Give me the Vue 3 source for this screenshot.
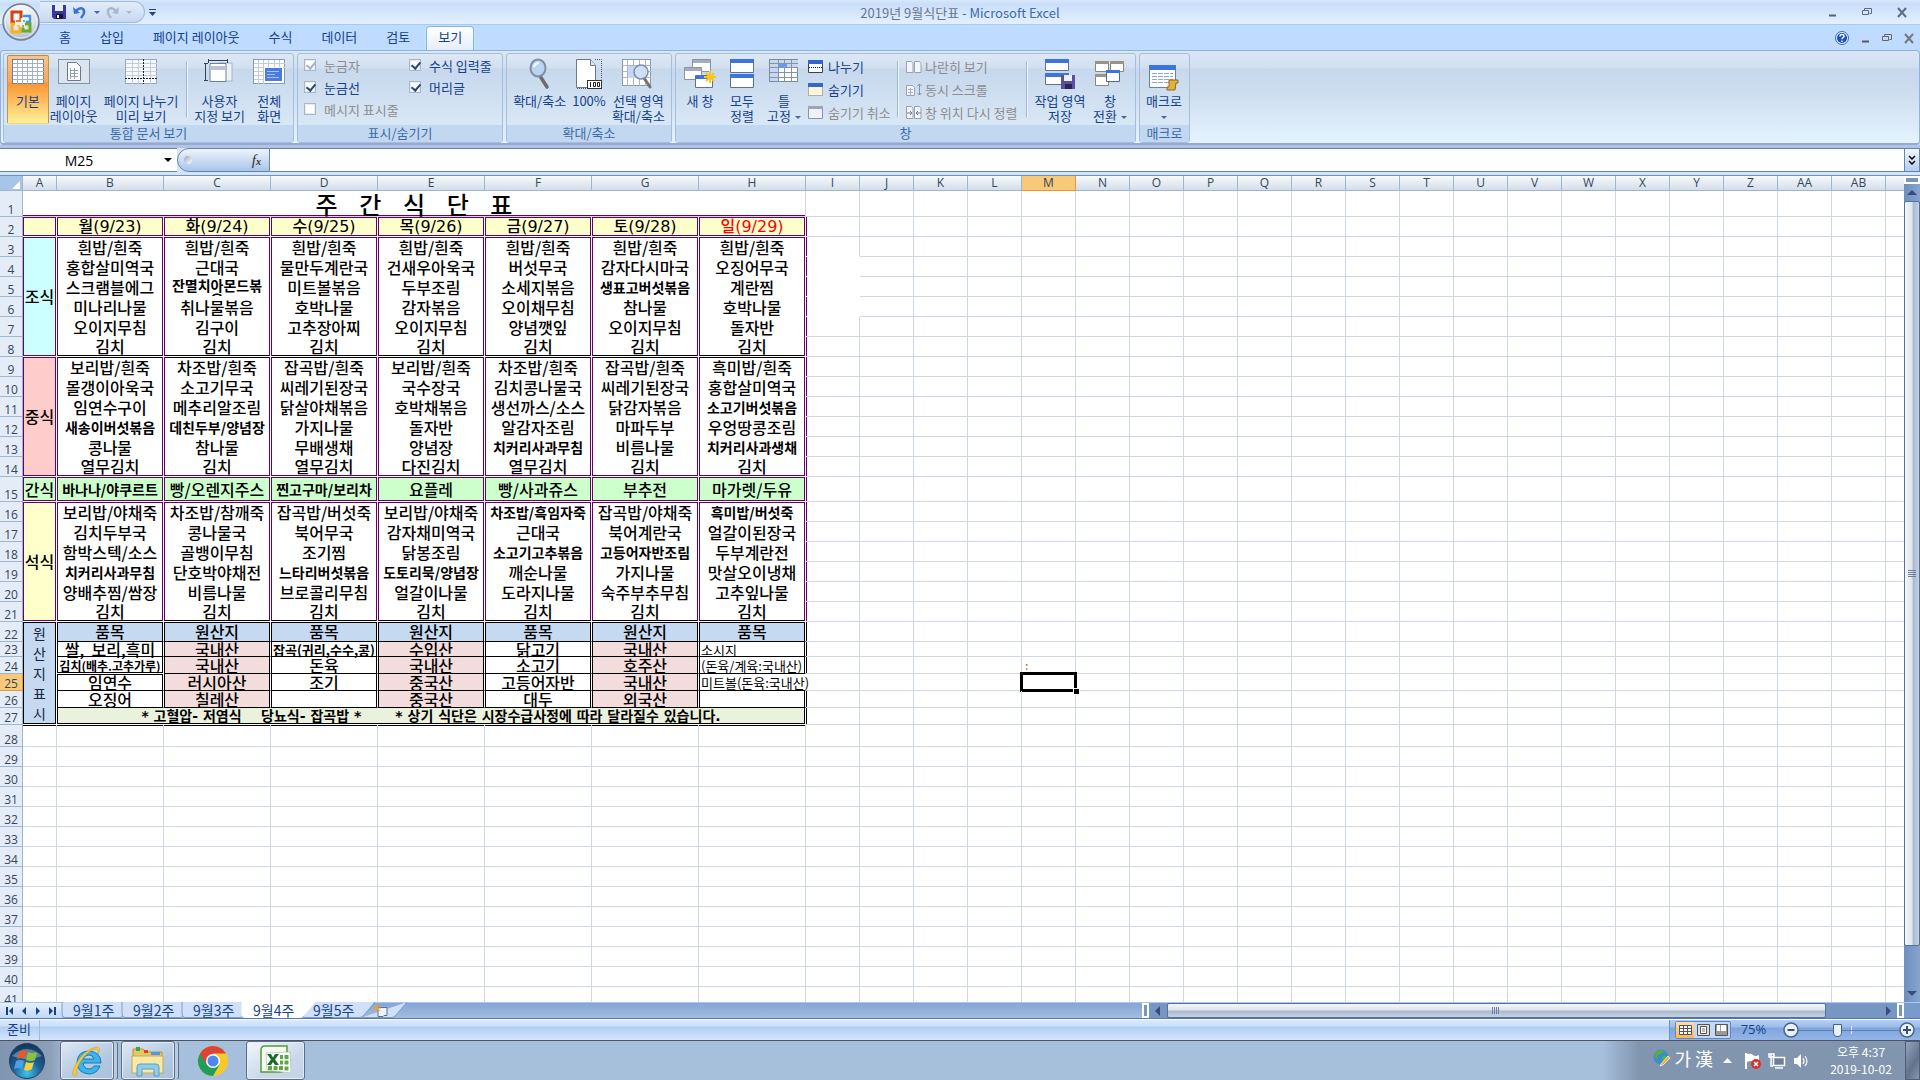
<script setup>
import { ref } from 'vue'

const tabs = ['홈', '삽입', '페이지 레이아웃', '수식', '데이터', '검토', '보기']
const sheets = ['9월1주', '9월2주', '9월3주', '9월4주', '9월5주']
const activeSheet = ref('9월4주')
const zoom = ref(37)

const letters = ['A', 'B', 'C', 'D', 'E', 'F', 'G', 'H', 'I', 'J', 'K', 'L', 'M', 'N', 'O', 'P', 'Q', 'R', 'S', 'T', 'U', 'V', 'W', 'X', 'Y', 'Z', 'AA', 'AB', 'AC']

const heading = '주    간    식    단    표'
const week = {
  2: '월(9/23)|화(9/24)|수(9/25)|목(9/26)|금(9/27)|토(9/28)|일(9/29)',
  3: '흰밥/흰죽|흰밥/흰죽|흰밥/흰죽|흰밥/흰죽|흰밥/흰죽|흰밥/흰죽|흰밥/흰죽',
  4: '홍합살미역국|근대국|물만두계란국|건새우아욱국|버섯무국|감자다시마국|오징어무국',
  5: '스크램블에그|잔멸치아몬드볶음|미트볼볶음|두부조림|소세지볶음|생표고버섯볶음|계란찜',
  6: '미나리나물|취나물볶음|호박나물|감자볶음|오이채무침|참나물|호박나물',
  7: '오이지무침|김구이|고추장아찌|오이지무침|양념깻잎|오이지무침|돌자반',
  8: '김치|김치|김치|김치|김치|김치|김치',
  9: '보리밥/흰죽|차조밥/흰죽|잡곡밥/흰죽|보리밥/흰죽|차조밥/흰죽|잡곡밥/흰죽|흑미밥/흰죽',
  10: '몰갱이아욱국|소고기무국|씨레기된장국|국수장국|김치콩나물국|씨레기된장국|홍합살미역국',
  11: '임연수구이|메추리알조림|닭살야채볶음|호박채볶음|생선까스/소스|닭감자볶음|소고기버섯볶음',
  12: '새송이버섯볶음|데친두부/양념장|가지나물|돌자반|알감자조림|마파두부|우엉땅콩조림',
  13: '콩나물|참나물|무배생채|양념장|치커리사과무침|비름나물|치커리사과생채',
  14: '열무김치|김치|열무김치|다진김치|열무김치|김치|김치',
  15: '바나나/야쿠르트|빵/오렌지주스|찐고구마/보리차|요플레|빵/사과쥬스|부추전|마가렛/두유',
  16: '보리밥/야채죽|차조밥/참깨죽|잡곡밥/버섯죽|보리밥/야채죽|차조밥/흑임자죽|잡곡밥/야채죽|흑미밥/버섯죽',
  17: '김치두부국|콩나물국|북어무국|감자채미역국|근대국|북어계란국|얼갈이된장국',
  18: '함박스텍/소스|골뱅이무침|조기찜|닭봉조림|소고기고추볶음|고등어자반조림|두부계란전',
  19: '치커리사과무침|단호박야채전|느타리버섯볶음|도토리묵/양념장|깨순나물|가지나물|맛살오이냉채',
  20: '양배추찜/쌈장|비름나물|브로콜리무침|얼갈이나물|도라지나물|숙주부추무침|고추잎나물',
  21: '김치|김치|김치|김치|김치|김치|김치',
  22: '품목|원산지|품목|원산지|품목|원산지|품목',
  23: '쌀,  보리,흑미|국내산|잡곡(귀리,수수,콩)|수입산|닭고기|국내산|소시지',
  24: '김치(배추.고추가루)|국내산|돈육|국내산|소고기|호주산|(돈육/계육:국내산)',
  25: '임연수|러시아산|조기|중국산|고등어자반|국내산|미트볼(돈육:국내산)',
  26: '오징어|칠레산||중국산|대두|외국산|'
}
const sideLabels = {
  2: { text: '', span: 1, cls: 'yellow' },
  3: { text: '조식', span: 6, cls: 'cyan' },
  9: { text: '중식', span: 6, cls: 'pink' },
  15: { text: '간식', span: 1, cls: 'green' },
  16: { text: '석식', span: 6, cls: 'yellow' },
  22: { text: '원산지표시', span: 6, cls: 'origin' }
}
const notice = '* 고혈압- 저염식    당뇨식- 잡곡밥 *       * 상기 식단은 시장수급사정에 따라 달라질수 있습니다.'

const heights = { 1: 26, 15: 25, 23: 15, 24: 17, 25: 17, 26: 17, 27: 17, 28: 22 }
const tinyText = { '잡곡(귀리,수수,콩)': 't13', '김치(배추.고추가루)': 't12' }
const blockEnds = [8, 14, 21]

function menuClass(row, col, text) {
  const c = ['box']
  if (row === 2) c.push('day', 'yellow', 'all')
  else if (row === 15) c.push('green', 'all')
  else if (row < 22) {
    if (row === 3 || row === 16) c.push('top')
    if (row === 9) c.push('topk')
    if (row === 8 || row === 21) c.push('botk')
    if (row === 14) c.push('bot')
    if (!blockEnds.includes(row)) c.push('mid')
  } else {
    c.push('ink')
    if (row === 22) c.push('blue', 'topk')
    else if (col % 2 === 1) c.push('rose')
    if (row === 24 && col === 0) c.push('botk', 'gap')
    if (row === 25 && col === 0) c.push('topk')
    if (row > 22 && col === 6) c.push('left')
    if (row === 25 && col === 6) c.push('open')
  }
  if (row === 2 && col === 6) c.push('red')
  if (tinyText[text]) c.push(tinyText[text])
  else if (row < 22 && row > 2 && (text.length > 7 || text === '흑미밥/버섯죽' || (text.length === 7 && !text.includes('/')))) c.push('t14')
  return c
}
function plainClass(row, i) {
  return {
    edge: i === 8 && row > 1 && row < 22,
    edgek: i === 8 && row > 21 && row < 28 && row !== 25,
    topline: row === 28 && i < 8,
    nobottom: i === 8 && row === 3,
    blank: i === 8 && row > 3 && row < 7,
    selected: row === 25 && i === 12
  }
}
const rows = Array.from({ length: 42 }, (_, k) => {
  const n = k + 1
  return {
    n,
    h: heights[n] || 20,
    side: sideLabels[n],
    menu: week[n] ? week[n].split('|') : null,
    start: n < 28 ? 8 : 0
  }
})
const range = (from) => Array.from({ length: 29 - from }, (_, i) => i + from)
</script>

<template>
  <div class="app">
    <header class="titlebar">
      <button class="orb" aria-label="Office">
        <svg width="40" height="40" viewBox="0 0 40 40">
          <defs>
            <radialGradient id="orbg" cx="50%" cy="30%" r="75%">
              <stop offset="0" stop-color="#fff" /><stop offset=".55" stop-color="#dfe3ea" /><stop offset="1" stop-color="#9da9bb" />
            </radialGradient>
          </defs>
          <circle cx="20" cy="20" r="18" fill="url(#orbg)" stroke="#6f7f99" stroke-width="1.5" />
          <circle cx="20" cy="20" r="16" fill="none" stroke="#fff" stroke-opacity=".7" />
          <g fill="none" stroke-width="3">
            <path d="M14 20h-3v-10h9v6" stroke="#d8400f" />
            <path d="M22 14h7v6h-4" stroke="#3f97d8" stroke-width="2.4" />
            <path d="M14 22h-3v8h8v-5" stroke="#f5b21a" />
            <path d="M22 26v3h7v-7h-5" stroke="#6aa82e" />
          </g>
          <g stroke-width="2" fill="none"><path d="M15 19h4v-3" stroke="#ef7a1a" /><path d="M22 19h2" stroke="#58b0e6" /><path d="M16 24h3" stroke="#f5c93a" /><path d="M22 23v3" stroke="#8ec34a" /></g>
        </svg>
      </button>
      <div class="qat">
        <button aria-label="저장"><svg width="14" height="14"><path d="M0 0h14v14h-12l-2-2z" fill="#3a37a0" /><path d="M3 0h8v6h-8z" fill="#e8ecfa" /><path d="M4 9h7v5h-7z" fill="#15153a" /><path d="M5 10h2v3h-2z" fill="#fff" /></svg></button>
        <button aria-label="실행 취소"><svg width="14" height="13"><path d="M3 5q4-4 7-2q3 3-2 9" fill="none" stroke="#3a6fd0" stroke-width="2.500" /><path d="M0 1l1 7 6-1z" fill="#3a6fd0" /></svg></button>
        <i class="caret"></i>
        <button aria-label="다시 실행" disabled><svg width="14" height="13"><path d="M11 5q-4-4-7-2q-3 3 2 9" fill="none" stroke="#a9b7cc" stroke-width="2.500" /><path d="M14 1l-1 7 -6-1z" fill="#a9b7cc" /></svg></button>
        <i class="caret dim"></i>
      </div>
      <button class="qatmore" aria-label="사용자 지정"><svg width="7" height="7"><path d="M0 .5h7" stroke="#27437a" /><path d="M0 3h7l-3.500 4z" fill="#27437a" /></svg></button>
      <h1 class="title"><span>2019년 9월식단표</span> - Microsoft Excel</h1>
      <div class="winbtns">
        <button aria-label="최소화"><svg width="9" height="9"><path d="M1 7.500h7" stroke="#51617a" stroke-width="2" /></svg></button>
        <button aria-label="복원"><svg width="10" height="9"><path d="M2.500 2v-1.500h7v5h-2M.5 2.500h6v4h-6z" fill="none" stroke="#5c6c86" /></svg></button>
        <button aria-label="닫기"><svg width="10" height="9"><path d="M1 0l8 9M9 0l-8 9" stroke="#5c6c86" stroke-width="2" /></svg></button>
      </div>
    </header>

    <nav class="tabs">
      <button v-for="t in tabs" :key="t" :class="{ on: t === '보기' }">{{ t }}</button>
      <div class="docbtns">
        <button aria-label="도움말"><svg width="14" height="14"><circle cx="7" cy="7" r="6.500" fill="#dfeafc" stroke="#3f6fb8" /><circle cx="7" cy="7" r="5" fill="#1c50c4" /><path d="M5 5.500q0-2 2-2t2 1.700q0 1-1 1.500t-1 1.500M7 9.500v1.500" stroke="#fff" stroke-width="1.400" fill="none" /></svg></button>
        <button aria-label="창 최소화"><svg width="9" height="9"><path d="M1 7.500h7" stroke="#5a5a5a" stroke-width="2" /></svg></button>
        <button aria-label="창 복원"><svg width="10" height="9"><path d="M2.500 2v-1.500h7v5h-2M.5 2.500h6v4h-6z" fill="none" stroke="#666" /></svg></button>
        <button aria-label="창 닫기"><svg width="10" height="9"><path d="M1 0l8 9M9 0l-8 9" stroke="#777" stroke-width="2" /></svg></button>
      </div>
    </nav>

    <section class="ribbon">
      <div class="group g1">
        <div class="tools">
          <button class="big w42 active">
            <svg width="32" height="26"><rect x=".5" y=".5" width="31" height="24" fill="#fff" stroke="#6b7f9e" /><path d="M5.500 1v24M10.500 1v24M15.500 1v24M20.500 1v24M25.500 1v24M1 4.500h31M1 8.500h31M1 12.500h31M1 16.500h31M1 20.500h31" stroke="#9fb0c8" /></svg>
            <span>기본</span>
          </button>
          <button class="big w50">
            <svg width="32" height="26"><rect x=".5" y=".5" width="31" height="24" fill="#dce4ee" stroke="#8794a8" /><path d="M9.500 3.500h9l4 4v14h-13z" fill="#fff" stroke="#68788f" /><path d="M12 11.500h8M12 14.500h8M12 17.500h8M12.500 9v11M16.500 9v11" stroke="#8fa0b8" /></svg>
            <span>페이지<br>레이아웃</span>
          </button>
          <button class="big w86">
            <svg width="32" height="26"><rect x=".5" y=".5" width="31" height="24" fill="#f6f8fb" stroke="#9aa8bd" /><path d="M7.500 1v24M13.500 1v24M25.500 1v24M1 4.500h31M1 8.500h31M1 12.500h31M1 16.500h31" stroke="#c3cddc" /><path d="M18.500 0v25M0 19.500h32" stroke="#223" stroke-dasharray="2 1" /></svg>
            <span>페이지 나누기<br>미리 보기</span>
          </button>
          <i class="sep"></i>
          <button class="big w58">
            <svg width="32" height="26"><path d="M14 4h14v18h-14z" fill="#eef1f6" stroke="#a9b4c6" /><path d="M6 4.500h16v18h-16z" fill="#fff" stroke="#6f7f99" /><path d="M7 7h14v4h-14z" fill="#b9c3d4" /><path d="M4 1.500h20M4.500 0v4M23.500 0v4M1.500 5v17M0 4.500h4M0 21.500h4" stroke="#33415c" /></svg>
            <span>사용자<br>지정 보기</span>
          </button>
          <button class="big w42">
            <svg width="32" height="26"><rect x=".5" y=".5" width="31" height="24" fill="#fff" stroke="#8b9ab2" /><path d="M5.500 1v24M10.500 1v24M15.500 1v8M21.500 1v8M26.500 1v8M1 4.500h31M1 8.500h31M1 12.500h10M1 16.500h10M1 20.500h10" stroke="#c0cbdb" /><rect x="11.500" y="8.500" width="18" height="14" fill="#4a7be0" stroke="#fff" /><path d="M14 12.500h12M14 15.500h8M14 18.500h12" stroke="#a9c2f6" /></svg>
            <span>전체<br>화면</span>
          </button>
        </div>
        <h2>통합 문서 보기</h2>
      </div>
      <div class="group g2">
        <div class="tools checks">
          <label class="off"><input type="checkbox" checked disabled>눈금자</label>
          <label><input type="checkbox" checked>수식 입력줄</label>
          <label><input type="checkbox" checked>눈금선</label>
          <label><input type="checkbox" checked>머리글</label>
          <label class="off wide"><input type="checkbox" disabled>메시지 표시줄</label>
        </div>
        <h2>표시/숨기기</h2>
      </div>
      <div class="group g3">
        <div class="tools">
          <button class="big w60">
            <svg width="24" height="30"><path d="M12 17l7 11" stroke="#6f6a70" stroke-width="3.500" stroke-linecap="round" /><ellipse cx="10" cy="9" rx="7.500" ry="8.500" fill="#b9d5f2" stroke="#7f8ea6" stroke-width="2" /><path d="M6 8q1-4 5-4" stroke="#fff" stroke-width="2" fill="none" /></svg>
            <span>확대/축소</span>
          </button>
          <button class="big w40">
            <svg width="26" height="30"><path d="M19 .5h6.500v20M1 29.500h24" stroke="#556" stroke-dasharray="1 1" fill="none" /><path d="M.5 .5h14l5 6v22h-19z" fill="#fff" stroke="#6b7890" /><path d="M14.500 .5v6h5" fill="#dfe5ee" stroke="#6b7890" /><rect x="11.500" y="21.500" width="14" height="8" fill="#fff" stroke="#333" /><path d="M14.500 23v5M17.500 23.500h2v4h-2zM21.500 23.500h2v4h-2z" stroke="#222" fill="none" /></svg>
            <span>100%</span>
          </button>
          <button class="big w60">
            <svg width="32" height="30"><rect x=".5" y=".5" width="28" height="26" fill="#fff" stroke="#8b9ab2" /><path d="M5.500 1v26M11.500 1v26M17.500 1v26M23.500 1v26M1 6.500h28M1 12.500h28M1 18.500h28" stroke="#a9b6ca" /><path d="M6 7h17v12h-17z" fill="#c4d6f4" /><path d="M22 19l6 9" stroke="#77716f" stroke-width="3" stroke-linecap="round" /><circle cx="19" cy="13" r="7" fill="#cfe2f7" fill-opacity=".8" stroke="#7f8ea6" stroke-width="1.500" /></svg>
            <span>선택 영역<br>확대/축소</span>
          </button>
        </div>
        <h2>확대/축소</h2>
      </div>
      <div class="group g4">
        <div class="tools">
          <button class="big w42">
            <svg width="32" height="30"><g fill="#fff" stroke="#8b94a4"><path d="M8.500 .5h18v12h-18z" /><path d="M.5 8.500h17v12h-17z" /></g><path d="M9 1h17v3h-17zM1 9h16v3h-16z" fill="#a5adba" /><path d="M11.500 16.500h17v12h-17z" fill="#fff" stroke="#5f7093" /><path d="M12 17h16v3h-16z" fill="#3d73dc" /><path d="M26 12v12M20 18h12M22 14l8 8M30 14l-8 8" stroke="#f7c51e" stroke-width="2" /></svg>
            <span>새 창</span>
          </button>
          <button class="big w42">
            <svg width="24" height="30"><path d="M.5 .5h23v13h-23zM.5 15.500h23v13h-23z" fill="#fff" stroke="#5f7093" /><path d="M0 0h24v4h-24zM0 15h24v4h-24z" fill="#3d73dc" /></svg>
            <span>모두<br>정렬</span>
          </button>
          <button class="big w42">
            <svg width="30" height="26"><rect x=".5" y=".5" width="28" height="22" fill="#fff" stroke="#7b8aa3" /><path d="M1 1h28v7h-28zM1 8h8v14h-8z" fill="#c9d7ee" /><path d="M9.500 1v22M15.500 1v22M22.500 1v22M1 4.500h28M1 8.500h28M1 13.500h28M1 18.500h28" stroke="#8493ac" /><path d="M10 5h8v4h-8z" fill="#6d9aec" /></svg>
            <span>틀<br>고정<i class="caret in"></i></span>
          </button>
          <div class="stack s1">
            <button><svg width="15" height="13"><path d="M.5 .5h14v12h-14z" fill="#fff" stroke="#33415c" /><path d="M0 0h15v4h-15z" fill="#3367cc" /><path d="M1 7.500h13" stroke="#222" stroke-dasharray="1 1" /></svg>나누기</button>
            <button><svg width="15" height="13"><path d="M.5 .5h14v12h-14z" fill="#fdf6dc" stroke="#776" stroke-dasharray="1 1" /><path d="M0 0h15v4h-15z" fill="#3367cc" /></svg>숨기기</button>
            <button disabled><svg width="15" height="13"><path d="M.5 .5h14v12h-14z" fill="#eef1f6" stroke="#8a94a6" /><path d="M0 0h15v3h-15z" fill="#9aa5b8" /></svg>숨기기 취소</button>
          </div>
          <i class="sep"></i>
          <div class="stack s2">
            <button disabled><svg width="16" height="13"><path d="M.5 1.500h5l1.500 2v9h-6.500zM8.500 1.500h5l1.500 2v9h-6.500z" fill="#f3f5f9" stroke="#96a2b6" /></svg>나란히 보기</button>
            <button disabled><svg width="16" height="13"><path d="M.5 2.500h6l2 2v8h-8z" fill="#f3f5f9" stroke="#96a2b6" /><path d="M2 6.500h5M2 9.500h5M4.500 5v7" stroke="#a8b2c3" /><path d="M13.500 1v11M11.500 3l2-2 2 2M11.500 10l2 2 2-2" stroke="#8591a5" fill="none" /></svg>동시 스크롤</button>
            <button disabled><svg width="16" height="13"><path d="M.5 .5h5l1.500 2v10h-6.500zM8.500 .5h5l1.500 2v10h-6.500z" fill="#f3f5f9" stroke="#96a2b6" /><path d="M1 7h5M4 5l2 2-2 2M15 7h-5M12 5l-2 2 2 2" stroke="#6f7c92" fill="none" /></svg>창 위치 다시 정렬</button>
          </div>
          <i class="sep"></i>
          <button class="big w58">
            <svg width="30" height="30"><path d="M.5 .5h23v11h-23zM.5 14.500h23v11h-23z" fill="#fff" stroke="#5f7093" /><path d="M0 0h24v4h-24zM0 14h24v4h-24z" fill="#3d73dc" /><path d="M16 16h14v14h-14z" fill="#5b4fa0" /><path d="M19 16h8v6h-8z" fill="#eef" /><path d="M20 25h7v5h-7z" fill="#2a2455" /></svg>
            <span>작업 영역<br>저장</span>
          </button>
          <button class="big w42">
            <svg width="30" height="28"><path d="M.5 2.500h13v10h-13zM15.500 2.500h13v10h-13zM.5 15.500h13v11h-13z" fill="#fff" stroke="#8b857a" /><path d="M0 2h14v3h-14zM15 2h14v3h-14zM0 15h14v3h-14z" fill="#9a9488" /><path d="M11.500 11.500h13v11h-13z" fill="#fff" stroke="#4767a5" /><path d="M11 11h14v3h-14z" fill="#3d73dc" /></svg>
            <span>창<br>전환<i class="caret in"></i></span>
          </button>
        </div>
        <h2>창</h2>
      </div>
      <div class="group g5">
        <div class="tools">
          <button class="big w42">
            <svg class="low" width="30" height="26"><path d="M.5 .5h26v22h-26z" fill="#fff" stroke="#6b7f9e" /><path d="M0 0h27v5h-27z" fill="#3d73dc" /><path d="M3 8.500h21M3 11.500h21M3 14.500h21M3 17.500h21" stroke="#8ea6cc" stroke-dasharray="5 1" /><path d="M20 15h9v3h-2l-1 7h-8v-3h2z" fill="#e0b040" stroke="#94691a" /></svg>
            <span>매크로<br><i class="caret mid"></i></span>
          </button>
        </div>
        <h2>매크로</h2>
      </div>
    </section>

    <div class="formula">
      <input class="namebox" value="M25" aria-label="이름 상자">
      <button class="namedrop" aria-label="이름 목록"><svg width="8" height="4"><path d="M0 0h8l-4 4z" fill="#000" /></svg></button>
      <div class="fxbar"><i></i><button aria-label="함수 삽입"><em>f</em><small>x</small></button></div>
      <input class="fxinput" value="" aria-label="수식 입력줄">
      <button class="expand" aria-label="확장"><svg width="8" height="9"><path d="M1 0l3 3 3-3M1 5l3 3 3-3" fill="none" stroke="#000" stroke-width="1.500" /></svg></button>
    </div>

    <main class="work">
      <div class="sheet">
        <table>
          <colgroup><col class="c0"><col class="ca"><col v-for="i in 7" :key="i" class="cb"><col v-for="i in 21" :key="'n' + i" class="cn"></colgroup>
          <thead>
            <tr><th class="corner"><svg width="8" height="8"><path d="M8 0v8h-8z" fill="#fff" /></svg></th><th v-for="l in letters" :key="l" :class="{ hot: l === 'M' }">{{ l }}</th></tr>
          </thead>
          <tbody>
            <tr v-for="r in rows" :key="r.n" :style="{ height: r.h + 'px' }">
              <th :class="{ hot: r.n === 25 }">{{ r.n }}</th>
              <td v-if="r.n === 1" colspan="8" class="heading">{{ heading }}</td>
              <td v-if="r.side" :rowspan="r.side.span" :class="['side', 'box', 'all', r.side.cls]">{{ r.side.text }}</td>
              <template v-if="r.menu">
                <td v-for="(m, c) in r.menu" :key="c" :class="menuClass(r.n, c, m)"><div v-if="m === '잔멸치아몬드볶음'" class="clip">{{ m }}</div><template v-else>{{ m }}</template></td>
              </template>
              <td v-if="r.n === 27" colspan="7" class="box ink botk notice">{{ notice }}</td>
              <td v-for="i in range(r.start)" :key="'p' + i" :class="plainClass(r.n, i)"><span v-if="r.n === 24 && i === 12" class="speck">:</span></td>
            </tr>
          </tbody>
        </table>
      </div>
      <div class="vscroll">
        <i class="split"></i>
        <button aria-label="위로"><svg width="10" height="5"><path d="M0 5l5-5 5 5z" fill="#3d4a78" /></svg></button>
        <div class="vtrack"><div class="vthumb"><i></i></div></div>
        <button aria-label="아래로"><svg width="10" height="5"><path d="M0 0l5 5 5-5z" fill="#3d4a78" /></svg></button>
      </div>
    </main>

    <div class="sheetbar">
      <div class="navs">
        <button aria-label="처음"><svg width="8" height="8"><path d="M1 0v8" stroke="#15428b" stroke-width="2" /><path d="M7 0v8l-4-4z" fill="#15428b" /></svg></button>
        <button aria-label="이전"><svg width="6" height="8"><path d="M5 0v8l-4-4z" fill="#15428b" /></svg></button>
        <button aria-label="다음"><svg width="6" height="8"><path d="M1 0v8l4-4z" fill="#15428b" /></svg></button>
        <button aria-label="마지막"><svg width="8" height="8"><path d="M7 0v8" stroke="#15428b" stroke-width="2" /><path d="M1 0v8l4-4z" fill="#15428b" /></svg></button>
      </div>
      <div class="stabs">
        <button v-for="s in sheets" :key="s" :class="{ on: s === activeSheet }" @click="activeSheet = s">
          <svg class="shape" width="74" height="15" viewBox="0 0 74 15"><path d="M0 -1v12q0 3.500 3 3.500h55q2 0 4-2.500l11-13" /></svg><span>{{ s }}</span>
        </button>
        <button class="new" aria-label="시트 삽입"><svg class="shape" width="50" height="15" viewBox="0 0 50 15"><path d="M0 14.500h30q2 0 4-2.500l11-13" /></svg><svg class="ico" width="16" height="13"><path d="M5 3.500h9v8h-3l-1 1h-5z" fill="#eef3fb" stroke="#5b6e93" /><path d="M4 0v8M0 4h8M1 1l6 6M7 1l-6 6" stroke="#e8a22a" /></svg></button>
      </div>
      <div class="hscroll">
        <i class="split"></i>
        <button aria-label="왼쪽"><svg width="5" height="10"><path d="M5 0v10l-5-5z" fill="#3d4a78" /></svg></button>
        <div class="htrack"><div class="hthumb"><i></i></div></div>
        <button aria-label="오른쪽"><svg width="5" height="10"><path d="M0 0v10l5-5z" fill="#3d4a78" /></svg></button>
        <i class="split"></i>
      </div>
      <i class="cornerfill"></i>
    </div>

    <footer class="status">
      <span class="ready">준비</span>
      <div class="fill"></div>
      <div class="right">
        <div class="views">
          <button class="on" aria-label="기본"><svg width="13" height="10"><path d="M.5 .5h12v9h-12zM1 3.500h12M1 6.500h12M4.500 0v10M8.500 0v10" fill="#fff" stroke="#555" /></svg></button>
          <button aria-label="페이지 레이아웃"><svg width="13" height="12"><path d="M.5 .5h12v11h-12z" fill="#ddd" stroke="#555" /><path d="M3.500 2.500h6v7h-6z" fill="#fff" stroke="#555" /><path d="M5 5h3M5 7h3" stroke="#777" /></svg></button>
          <button aria-label="페이지 나누기"><svg width="13" height="12"><path d="M.5 .5h12v11h-12z" fill="#999" stroke="#555" /><path d="M2 1h3v6h-3zM6 1h5v6h-5z" fill="#fff" /></svg></button>
        </div>
        <span class="pct">75%</span>
        <button class="rnd" aria-label="축소"><svg width="16" height="16"><circle cx="8" cy="8" r="7" fill="#e9f1fc" stroke="#4a6487" stroke-width="1.500" /><path d="M4.500 8h7" stroke="#3b4f6d" stroke-width="2" /></svg></button>
        <input type="range" min="0" max="100" v-model="zoom" aria-label="확대/축소">
        <button class="rnd" aria-label="확대"><svg width="16" height="16"><circle cx="8" cy="8" r="7" fill="#e9f1fc" stroke="#4a6487" stroke-width="1.500" /><path d="M4 8h8M8 4v8" stroke="#3b4f6d" stroke-width="2" /></svg></button>
      </div>
    </footer>

    <div class="taskbar">
      <button class="start" aria-label="시작">
        <svg width="38" height="38"><defs><radialGradient id="st" cx="50%" cy="85%" r="80%"><stop offset="0" stop-color="#3fc3ef" /><stop offset=".5" stop-color="#1c5f92" /><stop offset="1" stop-color="#14395c" /></radialGradient></defs><circle cx="19" cy="19" r="17.500" fill="url(#st)" stroke="#24405c" /><path d="M4 14q15-14 30 0q-15 6-30 0z" fill="#fff" fill-opacity=".3" /><path d="M11 10q4-3 8-1l-2 8q-4-2-8 0z" fill="#e8592a" /><path d="M20 10q4 2 9 0l-2 8q-4 2-9 0z" fill="#86c440" /><path d="M8 19q4-2 8 0l-2 8q-4-2-8 0z" fill="#4aa3e0" /><path d="M18 20q4 2 8 0l-2 7q-4 3-8 1z" fill="#f9cf3a" /></svg>
      </button>
      <button class="task stacked" aria-label="Internet Explorer">
        <svg width="32" height="32"><path d="M30 18h-18q1 6 6 6q4 0 5-3h6q-3 8-11 8q-12-1-12-12q1-11 12-11q12 1 12 12zM12 14h11q-1-4-5-4t-6 4z" fill="#3db4ea" stroke="#1878b8" /><path d="M4 31q-5-1 1-12q8-14 20-17q6 0 2 7q1-5-3-5q-8 2-15 13q-5 9-3 12z" fill="#f7cb35" stroke="#d79d1c" stroke-width=".6" /></svg>
      </button>
      <button class="task stacked" aria-label="탐색기">
        <svg width="34" height="32"><path d="M2 4h10l2 3h17v20h-29z" fill="#e7c765" stroke="#b9943a" /><path d="M5 2h4v4h-4z" fill="#3ea33a" /><path d="M13 5h4v3h-4z" fill="#d8432b" /><path d="M20 7h9v3h-9z" fill="#4d9be0" /><path d="M1 11h31v17h-31z" fill="#f8e9a6" stroke="#c9a850" /><path d="M6 31v-9q0-3 3-3h16q3 0 3 3v9h-5v-7h-12v7z" fill="#8fcdec" stroke="#5a9cc4" /></svg>
      </button>
      <button class="task plain" aria-label="Chrome">
        <svg width="32" height="32" viewBox="0 0 32 32"><circle cx="16" cy="16" r="15" fill="#f9c927" /><path d="M16 16l-13-7.500a15 15 0 0 0 13 22.500l6.500-11.200z" fill="#1e9e58" /><path d="M3 8.500a15 15 0 0 1 26 0h-13l-6.500 11.200z" fill="#dc4437" /><circle cx="16" cy="16" r="7" fill="#fff" /><circle cx="16" cy="16" r="5.500" fill="#4c86ee" /></svg>
      </button>
      <button class="task excel" aria-label="Excel">
        <svg width="32" height="32"><path d="M1 5q0-4 4-4h22v19l-5 7h-21z" fill="#f4f9f1" stroke="#4f9f37" stroke-width="1.500" /><path d="M6 8l24-1 1 21-24-3z" fill="#fff" stroke="#a9b5a5" stroke-width=".6" /><path d="M20 10h3v4h-3zM24.500 10h4v4h-4zM20 15.500h3v4h-3zM24.500 15.500h4v4h-4zM8 21h4v4h-4zM13.500 21h4v4h-4zM19 21h4v4h-4zM24.500 21.500h4v4h-4z" fill="#5fa648" /><path d="M7 9h4l2 3.500 2-3.500h4l-4 5.500 4 5.500h-4l-2-3-2 3h-4l4-5.500z" fill="#1c6a2b" /></svg>
      </button>
      <div class="tray">
        <svg width="18" height="18"><circle cx="8" cy="8" r="7.500" fill="#3c8fc4" /><path d="M2 4q4-4 8-3q1 3-3 4t-2 5q-4-1-3-6zM9 8q4-2 5 1q-1 4-4 5z" fill="#55b043" /><path d="M8 15l7-8 2 2-7 7-3 1z" fill="#f2a93a" stroke="#fff" stroke-width=".7" /></svg>
        <span class="ime">가 漢</span>
        <svg class="up" width="9" height="5"><path d="M0 5l4.500-5 4.500 5z" fill="#fff" /></svg>
        <svg class="flag" width="16" height="16"><path d="M1 0v16" stroke="#fff" stroke-width="2" /><path d="M2 1q4-1 6 1t6 0v8q-4 1-6-1t-6 0z" fill="#fff" /><circle cx="11" cy="11" r="5" fill="#d8312b" /><path d="M9 9l4 4M13 9l-4 4" stroke="#fff" stroke-width="1.500" /></svg>
        <svg width="16" height="16"><path d="M4.500 4.500h11v8h-11z" fill="#6d7f98" stroke="#fff" stroke-width="1.500" /><path d="M6 15h8M2 1v4M0 1h5v3h-5zM2 5v8h2" stroke="#fff" stroke-width="1.500" fill="none" /></svg>
        <svg width="16" height="16"><path d="M1 5h3l4-4v14l-4-4h-3z" fill="#fff" /><path d="M10 5q2 3 0 6M12 3q4 5 0 10" stroke="#fff" fill="none" stroke-width="1.200" /></svg>
        <div class="clock"><span>오후 4:37</span><span>2019-10-02</span></div>
        <button class="peek" aria-label="바탕 화면 보기"></button>
      </div>
    </div>
  </div>
</template>

<style>
html, body { height: 100%; }
body { margin: 0; }
#app { height: 100%; }
</style>

<style scoped>
.app { height: 100%; display: flex; flex-direction: column; overflow: hidden; background: #bfdbff; font: 13px/15px "Noto Sans CJK KR", sans-serif; color: #15428b; }
* { box-sizing: border-box; }
button, input { font: inherit; color: inherit; margin: 0; padding: 0; border: 0; background: none; outline: none; }
svg { display: block; flex: none; overflow: visible; }
h1, h2 { margin: 0; font: inherit; }
i { font-style: normal; }

/* title bar */
.titlebar { position: relative; z-index: 2; flex: none; height: 25px; display: flex; align-items: center; background: linear-gradient(#d9e8fa 0, #c9def9 4px, #dcebfd 18px, #e3f0ff); border-bottom: 1px solid #a7caf5; }
.orb { position: absolute; left: 1px; top: 2px; }
.qat { display: flex; align-items: center; gap: 5px; height: 22px; margin-left: 40px; padding: 0 12px 0 12px; border: 1px solid #a0bbe0; border-left: 0; border-radius: 0 11px 11px 0; background: linear-gradient(#e3edfa, #c6d8f0); }
.qat button { margin-right: 2px; }
.caret { display: inline-block; border: 3px solid transparent; border-top: 3px solid #44689c; border-bottom: 0; }
.caret.dim { border-top-color: #a9b7cc; }
.caret.in { margin-left: 4px; vertical-align: middle; }
.caret.mid { vertical-align: middle; }
.qatmore { margin-left: 4px; }
.title { position: absolute; left: 0; right: 0; top: 5px; text-align: center; color: #3e6aaa; pointer-events: none; }
.title span { color: #69758c; }
.winbtns { margin-left: auto; display: flex; gap: 25px; margin-right: 13px; }

.tabs { flex: none; height: 25px; display: flex; align-items: flex-end; padding-left: 46px; background: #bfdbff; }
.tabs > button { height: 24px; padding: 0 12px; margin-right: 3px; line-height: 20px; border-radius: 4px 4px 0 0; border: 1px solid transparent; border-bottom: 0; padding-bottom: 3px; }
.tabs > button.on { background: linear-gradient(#fff, #e6eefa); border-color: #8db2e3; box-shadow: 0 0 3px #9ff; padding: 0 11px 3px; }
.docbtns { margin-left: auto; display: flex; align-items: center; gap: 12px; height: 24px; margin-right: 6px; }

/* ribbon */
.ribbon { flex: none; height: 95px; display: flex; gap: 3px; padding: 2px 3px; border: 1px solid #8db2e3; border-bottom: 2px solid #9aa8cf; border-radius: 4px; background: linear-gradient(#dbe6f4 0, #d0dff0 17px, #c7d8ee 18px, #cddcee 40px, #e3f4ff); }
.group { height: 90px; display: flex; flex-direction: column; border: 1px solid #a3bfdc; border-radius: 3px; background: linear-gradient(#dee8f5 0, #d1dfef 14px, #c7d8ed 15px, #d8e7f5 70px); }
.g1 { width: 291px; margin-left: -1px; }
.g2 { width: 206px; }
.g3 { width: 166px; }
.g4 { width: 461px; }
.g5 { width: 51px; }
.tools { flex: 1; display: flex; padding: 1px 3px 0; }
.group h2 { height: 17px; line-height: 15px; text-align: center; color: #3e6aaa; background: #c2d8f0; }
.big { display: flex; flex-direction: column; align-items: center; height: 69px; padding-top: 3px; border: 1px solid transparent; white-space: nowrap; }
.big svg { height: 34px; }
.big svg.low { padding-top: 6px; height: 34px; }
.big.active { border-color: #b58a4a #c2954d #ffd45c; border-radius: 2px; background: linear-gradient(#fbc48a 0, #fba55a 26px, #fd9430 27px, #fee187 60px, #fdf0a0); }
.w40 { width: 40px; } .w42 { width: 42px; } .w50 { width: 50px; } .w58 { width: 58px; } .w60 { width: 60px; } .w86 { width: 86px; }
.sep { width: 2px; height: 56px; margin: 6px 3px 0 2px; background: linear-gradient(90deg, #9cb6d8 50%, #f4f8fd 50%); }
.tools.checks { display: grid; grid-template-columns: 105px 1fr; grid-auto-rows: 22px; padding: 0 3px 0 6px; align-items: center; }
.checks label { display: flex; align-items: center; gap: 8px; white-space: nowrap; }
.checks .wide { grid-column: span 2; }
.checks .off, .stack button:disabled { color: #8d8d8d; }
.checks input { appearance: none; width: 12px; height: 12px; border: 1px solid #a7b6cb; background: #fff; box-shadow: inset 0 0 0 1px #e6ebf2; position: relative; }
.checks input:checked::after { content: ""; position: absolute; left: 3px; top: 0; width: 4px; height: 7px; border: solid #2c4674; border-width: 0 2px 2px 0; transform: rotate(40deg); }
.checks .off input:checked::after { border-color: #a9b4c4; }
.stack { display: flex; flex-direction: column; }
.stack button { display: flex; align-items: center; gap: 5px; height: 23px; white-space: nowrap; }
.s1 { width: 90px; padding-left: 3px; }
.s2 { width: 122px; padding-left: 4px; }
.s2 button { gap: 3px; }

/* formula bar */
.formula { flex: none; display: flex; height: 31px; padding-top: 3px; border-bottom: 1px solid #6f93bd; background: linear-gradient(#b2c4e6 3px, #d6e5f6 3px); }
.formula > * { height: 24px; border-top: 1px solid #5f86b0; border-bottom: 1px solid #5f86b0; background: #fff; }
.namebox { width: 158px; text-align: center; color: #000; font-size: 14px; font-family: "Open Sans", sans-serif; }
.namedrop { width: 19px; display: flex; align-items: center; justify-content: center; }
.fxbar { width: 93px; display: flex; align-items: center; justify-content: space-between; padding: 0 8px 0 6px; border: 1px solid #5f86b0; border-radius: 12px 0 0 12px; background: linear-gradient(#eef4fc, #a9c4ea); }
.fxbar i { width: 8px; height: 8px; border-radius: 4px; background: linear-gradient(135deg, #99a8bd, #fff); }
.fxbar em { font: italic 15px "Liberation Serif", serif; color: #333; }
.fxbar small { font: italic 700 10px "Liberation Serif", serif; color: #333; }
.fxinput { flex: 1; min-width: 0; }
.formula .expand { width: 16px; display: flex; align-items: center; justify-content: center; border: 1px solid #5f86b0; background: linear-gradient(#f3f8fe, #b5cced); }

/* worksheet */
.work { flex: 1; min-height: 0; display: flex; background: #fff; }
.sheet { flex: 1; min-width: 0; overflow: hidden; }
table { table-layout: fixed; border-collapse: separate; border-spacing: 0; width: 1940px; color: #000; }
.c0 { width: 23px; } .ca { width: 34px; } .cb { width: 107px; } .cn { width: 54px; }
th { height: 15px; padding: 0; font: 12px/13px "Open Sans", sans-serif; color: #35465c; border: solid #9eb6ce; border-width: 0 1px 1px 0; }
thead th { background: linear-gradient(#f8fafc, #d5dde9); line-height: 14px; }
thead th.corner { background: #a9c4e9; }
.corner svg { margin-left: 12px; margin-top: 4px; }
tbody th { background: #e4ecf7; vertical-align: bottom; }
thead th.hot, tbody th.hot { background: #f8c978; border-color: #f29536; }
td { padding: 0; border: solid #d0d7e5; border-width: 0 1px 1px 0; font-size: 16px; line-height: 13px; text-align: center; white-space: pre; font-weight: 500; position: relative; }
.heading { font-size: 24px; line-height: 22px; box-shadow: inset 0 -1px #606; }
.box { --l: #606; --t: transparent; --b: transparent; border-color: #fff; border-bottom-color: transparent; background-clip: padding-box; box-shadow: inset 1px 0 var(--l), inset -1px 0 var(--l), inset 0 1px var(--t), inset 0 -1px var(--b); }
.box.mid { border-bottom-width: 0; }
.all { --t: var(--l); --b: var(--l); }
.top { --t: #606; }
.bot { --b: #606; }
.topk { --t: #000; }
.botk { --b: #000; }
.ink { --l: #000; border-bottom-color: #000; }
.ink.gap { border-bottom-color: #fff; }
.yellow { background-color: #ffc; }
.cyan { background-color: #cff; }
.pink { background-color: #fcc; }
.green { background-color: #cfc; }
.blue { background-color: #c5d9f1; }
.rose { background-color: #f2dddc; }
.red { color: #f00; }
.day { font-family: "DejaVu Sans", "Noto Sans CJK KR", sans-serif; }
.side { white-space: normal; }
.origin { --l: #000; background-color: #c5d9f1; font-size: 14px; line-height: 20px; font-weight: 400; padding: 0 9px; color: #17253f; }
.notice { background-color: #eaf1dd; font: 700 14px/13px "DejaVu Sans", "Noto Sans CJK KR", sans-serif; border-bottom-color: #fff; }
.t14 { font-size: 14px; font-weight: 700; }
.t13 { font-size: 13px; font-weight: 700; }
.t12 { font-size: 12px; font-weight: 700; }
.left { text-align: left; font-size: 13px; font-weight: 400; padding-left: 2px; }
.open { border-right-color: transparent; box-shadow: inset 1px 0 #000; z-index: 1; }
.clip { height: 18px; overflow: hidden; white-space: normal; line-height: 14px; padding: 0 6px; }
.edge { box-shadow: inset 1px 0 #606; }
.edgek { box-shadow: inset 1px 0 #000; }
.topline { box-shadow: inset 0 1px #000; }
.blank { border-color: transparent; }
.nobottom { border-bottom-color: transparent; }
.selected::after { content: ""; position: absolute; left: -2px; top: -2px; right: -2px; bottom: -2px; border: 3px solid #000; }
.selected::before { content: ""; position: absolute; z-index: 1; right: -4px; bottom: -4px; width: 5px; height: 5px; background: #000; box-shadow: 0 0 0 1px #fff; }
.speck { position: absolute; left: 3px; top: 2px; font-size: 11px; color: #a07040; }

/* scroll bars */
.vscroll { width: 16px; display: flex; flex-direction: column; background: linear-gradient(90deg, #6d8fbd, #86a4cf); }
.vscroll .split { height: 8px; border: 2px solid #fff; background: #7b96bd; }
.vscroll button { height: 17px; display: flex; align-items: center; justify-content: center; }
.vtrack { flex: 1; }
.vthumb { height: 95%; display: flex; align-items: center; justify-content: center; border: 1px solid #55709b; border-radius: 2px; background: linear-gradient(90deg, #f4f6fa, #dfe4ec 50%, #a9bacf 60%, #c6d2e2); }
.vthumb i { width: 8px; height: 7px; background: repeating-linear-gradient(#6d7f9c 0 1px, transparent 1px 2px); }

.sheetbar { flex: none; height: 17px; display: flex; border-top: 1px solid #a9c8ef; border-bottom: 1px solid #4f79b0; background: linear-gradient(#86a5d3, #a2bde2); }
.navs { width: 62px; display: flex; align-items: center; justify-content: space-around; padding: 0 2px; background: linear-gradient(#e6f0fd, #c0d7f6); }
.stabs { flex: 1; display: flex; min-width: 0; }
.stabs button { position: relative; width: 60px; text-align: left; padding-left: 11px; font-size: 14px; line-height: 13px; }
.stabs span { position: relative; white-space: nowrap; }
.shape { position: absolute; left: 0; top: 0; fill: #cfe0f8; stroke: #7f9cc6; }
.on .shape { fill: #fff; stroke: #fff; }
.stabs .on { z-index: 1; }
.ico { position: absolute; left: 11px; top: 1px; }
.hscroll { flex: 0 0 39.7%; display: flex; }
.hscroll .split, .sheetbar .hscroll .split { width: 7px; border: 2px solid #fff; background: #7b96bd; }
.hscroll button { width: 18px; display: flex; align-items: center; justify-content: center; background: #7796c4; }
.htrack { flex: 1; background: #7796c4; }
.hthumb { width: 92.5%; height: 15px; display: flex; align-items: center; justify-content: center; border: 1px solid #55709b; border-radius: 2px; background: linear-gradient(#f4f6fa, #dfe4ec 45%, #a9bacf 55%, #c6d2e2); }
.hthumb i { width: 8px; height: 7px; background: repeating-linear-gradient(90deg, #6d7f9c 0 1px, transparent 1px 2px); }
.cornerfill { width: 16px; background: #7a9acb; }

/* status bar */
.status { flex: none; height: 21px; display: flex; align-items: stretch; border-top: 1px solid #fff; background: linear-gradient(#dbe8fa 0, #cbdff9 6px, #b0cff5 7px, #d6e5fb); }
.ready { width: 40px; padding-left: 7px; line-height: 17px; border-right: 1px solid #9db9e0; }
.fill { flex: 1; }
.right { display: flex; align-items: center; padding: 0 5px 0 5px; border-left: 1px solid #6f92c6; background: linear-gradient(#b6cff2 0, #9cbcea 7px, #7fa5de 8px, #94b5e6); }
.views { display: flex; height: 18px; border: 1px solid #6288bf; border-radius: 2px; background: #c4d8f3; }
.views button { width: 18px; display: flex; align-items: center; justify-content: center; }
.views .on { background: linear-gradient(#fbdfae, #f9b94c); }
.pct { width: 41px; text-align: center; font-family: "Open Sans", sans-serif; font-size: 13px; line-height: 17px; margin: 0 9px 2px 2px; }
.right input { appearance: none; width: 100px; height: 14px; background: linear-gradient(#5f83b9, #5f83b9) center / 100% 1px no-repeat, linear-gradient(#dde9f9, #dde9f9) 52px center / 1px 8px no-repeat; }
.right input::-webkit-slider-thumb { appearance: none; width: 9px; height: 13px; background: #e9f1fc; border: 1px solid #4a6487; border-radius: 1px 1px 5px 5px; }

/* taskbar */
.taskbar { flex: none; height: 40px; display: flex; border-top: 1px solid #4b5563; background: linear-gradient(90deg, #8095b0, #8c9fb9 50px, #a6bfdb 70px); }
.start { width: 60px; display: flex; align-items: center; padding-left: 8px; }
.task { width: 54px; height: 39px; display: flex; align-items: center; justify-content: center; border: 1px solid #5d6f87; border-radius: 3px; background: linear-gradient(150deg, #dfe8f3, #b4c9e1 60%, #a9c0dc); box-shadow: inset 0 0 0 1px #e4edf7; }
.stacked { margin-right: 7px; box-shadow: inset 0 0 0 1px #e4edf7, 4px 0 0 -1px #b9cbe0, 5px 0 0 -1px #5d6f87; }
.plain { width: 62px; border: 0; background: none; box-shadow: none; margin-right: 2px; }
.excel { width: 59px; background: linear-gradient(150deg, #f4f7fb, #cad9ea 60%, #c2d3e7); }
.tray { margin-left: auto; display: flex; align-items: center; padding-left: 50px; color: #fff; background: linear-gradient(90deg, #a6bfdb00, #8195ae 36px); }
.ime { font-size: 18px; margin: 0 10px 6px 3px; line-height: 20px; }
.tray > svg:first-child { margin-bottom: 6px; }
.tray > .up { margin-right: 13px; }
.tray > svg + svg { margin-right: 8px; }
.clock { width: 88px; display: flex; flex-direction: column; text-align: center; line-height: 17px; font-size: 12px; margin-bottom: 2px; }
.peek { width: 15px; height: 39px; border: 1px solid #4f5f76; background: linear-gradient(120deg, #93a5bc, #62748c 60%, #8698af); }
</style>
